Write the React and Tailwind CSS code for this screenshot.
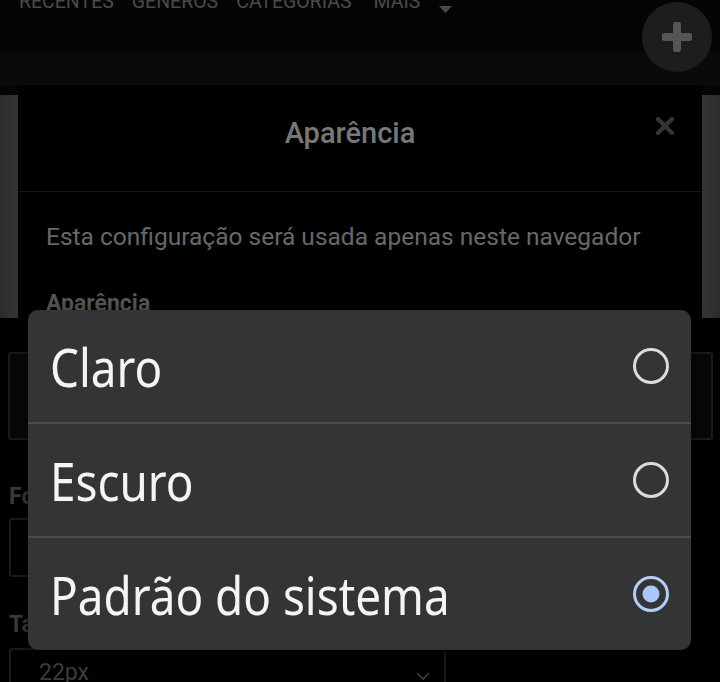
import React from "react";

function Radio({ checked }) {
  if (checked) {
    return (
      <svg width="38" height="38" viewBox="0 0 38 38">
        <circle cx="19" cy="19" r="16.5" fill="none" stroke="#b4cdf5" strokeWidth="3" />
        <circle cx="19" cy="19" r="8.5" fill="#a8c7fa" />
      </svg>
    );
  }
  return (
    <svg width="38" height="38" viewBox="0 0 38 38">
      <circle cx="19" cy="19" r="16.5" fill="none" stroke="#dcdcdc" strokeWidth="3" />
    </svg>
  );
}

function MenuRow({ label, checked }) {
  return (
    <div className="h-[112px] flex items-center justify-between pl-[22px] pr-[21px]">
      <span className="inline-block origin-left scale-x-[0.865] text-[53px] leading-none text-[#f4f4f4] whitespace-nowrap font-['Noto_Sans',sans-serif]">
        {label}
      </span>
      <Radio checked={checked} />
    </div>
  );
}

export default function App() {
  return (
    <div className="relative w-[720px] h-[682px] overflow-hidden bg-black font-['Roboto',sans-serif]">
      {/* top nav */}
      <div className="h-[52px] bg-[#050505] overflow-hidden">
        <div className="flex items-start pl-[19px] -mt-[9px] text-[19.5px] leading-[22px] text-[#4a4a4a] uppercase">
          <span>Recentes</span>
          <span className="ml-[18px]">Gêneros</span>
          <span className="ml-[18px]">Categorias</span>
          <span className="ml-[22px]">Mais</span>
          <svg width="13" height="8" viewBox="0 0 13 8" className="ml-[19px] mt-[15px]">
            <path d="M0 0 L13 0 L6.5 7 Z" fill="#4a4a4a" />
          </svg>
        </div>
      </div>
      <div className="h-[33px] bg-[#0a0a0a]" />

      {/* upper section with dialog */}
      <div className="flex h-[233px]">
        <div className="w-[18px] flex flex-col">
          <div className="h-[10px] bg-[#050505]" />
          <div className="flex-1 bg-gradient-to-r from-[#2c2c2c] to-[#353535]" />
        </div>
        <div className="flex-1 bg-black flex flex-col">
          <div className="relative h-[107px] flex justify-center pt-[31px] pr-[20px] border-b border-[#151515]">
            <span className="text-[29px] leading-[34px] font-medium text-[#777]">Aparência</span>
            <svg
              width="18"
              height="18"
              viewBox="0 0 18 18"
              className="absolute right-[28px] top-[32px]"
            >
              <path d="M2 2 L16 16 M16 2 L2 16" stroke="#333" strokeWidth="4.5" strokeLinecap="round" />
            </svg>
          </div>
          <div className="pl-[28px] pt-[30px]">
            <p className="text-[24.5px] leading-[30px] text-[#686868] whitespace-nowrap">
              Esta configuração será usada apenas neste navegador
            </p>
            <p className="mt-[38px] text-[23px] leading-[28px] font-bold text-[#555]">Aparência</p>
          </div>
        </div>
        <div className="w-[18px] flex flex-col">
          <div className="h-[10px] bg-[#050505]" />
          <div className="flex-1 bg-gradient-to-r from-[#353535] to-[#2c2c2c]" />
        </div>
      </div>

      {/* lower form area */}
      <div className="bg-black pl-[8px] pr-[7px]">
        <div className="mt-[34px] h-[88px] border-2 border-[#1a1a1a] bg-[#070707] rounded-[3px]" />
        <p className="mt-[44px] pl-[1px] text-[23px] leading-[26px] font-bold text-[#3a3a3a]">Fonte</p>
        <div className="mt-[8px] ml-[1px] w-[437px] h-[59px] border-2 border-[#1a1a1a] rounded-[3px]" />
        <p className="mt-[35px] pl-[1px] text-[23px] leading-[26px] font-bold text-[#3a3a3a]">Tamanho</p>
        <div className="mt-[10px] ml-[1px] w-[437px] h-[60px] border-2 border-[#1a1a1a] rounded-[3px] flex items-start justify-between pl-[28px] pr-[14px] pt-[10px]">
          <span className="text-[23px] leading-[26px] text-[#3c3c3c]">22px</span>
          <svg width="14" height="9" viewBox="0 0 14 9" className="mt-[12px]">
            <path d="M1 1 L7 7 L13 1" fill="none" stroke="#3c3c3c" strokeWidth="1.6" />
          </svg>
        </div>
      </div>

      {/* floating action button */}
      <div className="absolute left-[642px] top-[2px] w-[70px] h-[70px] rounded-full bg-[#1d1d1d] flex items-center justify-center">
        <svg width="30" height="30" viewBox="0 0 30 30">
          <path d="M15 3 V27 M3 15 H27" stroke="#555" strokeWidth="8" strokeLinecap="round" />
        </svg>
      </div>

      {/* popup menu */}
      <div className="absolute left-[28px] top-[310px] w-[663px] h-[340px] rounded-[10px] bg-[#333436] shadow-[0_4px_14px_rgba(0,0,0,0.6)] overflow-hidden flex flex-col">
        <MenuRow label="Claro" />
        <div className="h-[2px] bg-[#4b4c4e]" />
        <MenuRow label="Escuro" />
        <div className="h-[2px] bg-[#4b4c4e]" />
        <MenuRow label="Padrão do sistema" checked />
      </div>
    </div>
  );
}
